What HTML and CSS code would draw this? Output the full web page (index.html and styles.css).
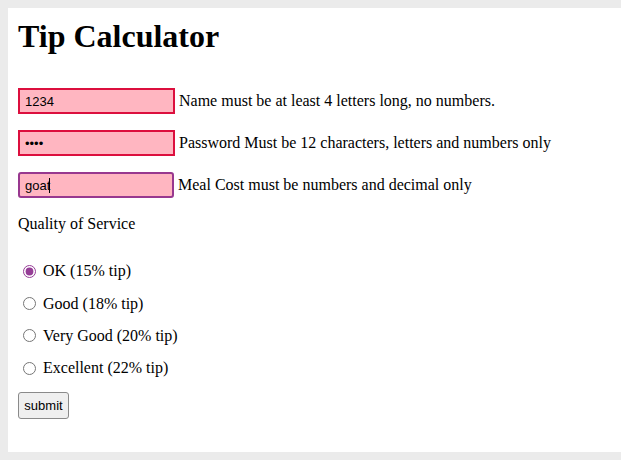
FILE: index.html
```html
<!DOCTYPE html>
<html>
<head>
<meta charset="utf-8">
<title>Tip Calculator</title>
<link rel="stylesheet" href="styles.css">
</head>
<body>
<h1 class="title">Tip Calculator</h1>
<form class="tip-form">
  <div class="field">
    <input class="text-input invalid" type="text" value="1234">
    <span class="msg">Name must be at least 4 letters long, no numbers.</span>
  </div>
  <div class="field">
    <input class="text-input invalid" type="password" value="1234">
    <span class="msg">Password Must be 12 characters, letters and numbers only</span>
  </div>
  <div class="field">
    <span class="input-wrap">
      <input class="text-input focused" type="text" value="goat">
      <span class="caret"></span>
    </span>
    <span class="msg">Meal Cost must be numbers and decimal only</span>
  </div>
  <p class="section-label">Quality of Service</p>
  <div class="radios">
    <label class="radio-row"><input class="radio" type="radio" name="q" checked> OK (15% tip)</label>
    <label class="radio-row"><input class="radio" type="radio" name="q"> Good (18% tip)</label>
    <label class="radio-row"><input class="radio" type="radio" name="q"> Very Good (20% tip)</label>
    <label class="radio-row"><input class="radio" type="radio" name="q"> Excellent (22% tip)</label>
  </div>
  <button class="submit-btn" type="button">submit</button>
</form>
</body>
</html>
```
FILE: styles.css
```css
html {
  background: #ebebeb;
}
body {
  margin: 8px 0 8px 8px;
  padding: 10px;
  background: #ffffff;
  font-family: "Liberation Serif", "Times New Roman", serif;
  font-size: 16px;
  color: #000;
  height: 424px;
  box-sizing: content-box;
}
.title {
  margin: 0;
  font-size: 32px;
  font-weight: bold;
  line-height: 32px;
  padding-top: 2px;
}
.tip-form {
  margin-top: 36px;
}
.field {
  display: flex;
  align-items: center;
  gap: 4px;
  margin-bottom: 16px;
  height: 26px;
}
.input-wrap {
  position: relative;
  display: inline-block;
  height: 26px;
}
.text-input {
  box-sizing: border-box;
  width: 157px;
  height: 26px;
  margin: 0;
  padding: 0 5px;
  border: 2px solid #dc0f3e;
  background: #ffb6c1;
  font-family: "Liberation Sans", Arial, sans-serif;
  font-size: 13px;
  color: #000;
  outline: none;
}
.text-input.focused {
  border-color: #98388f;
  border-radius: 3px;
  width: 156px;
}
.caret {
  position: absolute;
  left: 31px;
  top: 6px;
  width: 1px;
  height: 15px;
  background: #000;
}
.msg {
  line-height: 18px;
}
.section-label {
  margin: 17px 0 0;
  line-height: 18px;
}
.radios {
  margin-top: 29px;
}
.radio-row {
  display: flex;
  align-items: center;
  height: 18.4px;
  margin-bottom: 14px;
}
.radio {
  width: 13px;
  height: 13px;
  margin: 0 7px 0 5px;
  accent-color: #953d96;
}
.submit-btn {
  margin-top: 0;
  box-sizing: border-box;
  width: 51px;
  height: 27px;
  padding: 0;
  border: 1px solid #8a8a8a;
  border-radius: 3px;
  background: #efefef;
  font-family: "Liberation Sans", Arial, sans-serif;
  font-size: 13px;
  color: #000;
}
```
